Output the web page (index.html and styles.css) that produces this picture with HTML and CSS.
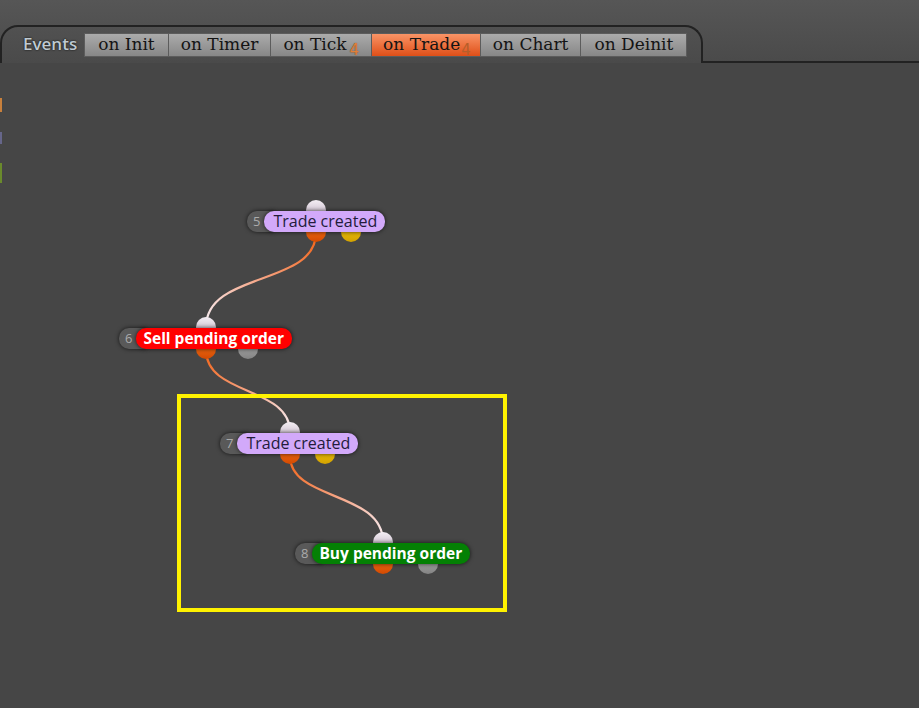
FILE: index.html
```html
<!DOCTYPE html>
<html lang="en">
<head>
    <meta charset="UTF-8">
    <meta name="viewport" content="width=device-width, initial-scale=1.0">
    <title>Events</title>
    <link rel="stylesheet" href="styles.css">
</head>
<body>

    <div class="header">
        <div class="tab-panel">
            <span class="events-label">Events</span>
            <div class="tabs">
                <div class="tab">on Init</div>
                <div class="tab">on Timer</div>
                <div class="tab">on Tick<span class="count">4</span></div>
                <div class="tab active">on Trade<span class="count">4</span></div>
                <div class="tab">on Chart</div>
                <div class="tab">on Deinit</div>
            </div>
        </div>
        <div class="header-rest"></div>
    </div>

    <div class="canvas">
        <!-- bouts de la palette coupée à gauche -->
        <div class="edge-mark mark-orange"></div>
        <div class="edge-mark mark-purple"></div>
        <div class="edge-mark mark-green"></div>

        <svg class="links" width="919" height="646" viewBox="0 62 919 646">
            <defs>
                <linearGradient id="link1" gradientUnits="userSpaceOnUse" x1="316" y1="232" x2="206" y2="326">
                    <stop offset="0" stop-color="#f26418"/>
                    <stop offset="0.5" stop-color="#f7a585"/>
                    <stop offset="1" stop-color="#f6eef4"/>
                </linearGradient>
                <linearGradient id="link2" gradientUnits="userSpaceOnUse" x1="206" y1="349" x2="290" y2="431">
                    <stop offset="0" stop-color="#f26418"/>
                    <stop offset="0.5" stop-color="#f7a585"/>
                    <stop offset="1" stop-color="#f6eef4"/>
                </linearGradient>
                <linearGradient id="link3" gradientUnits="userSpaceOnUse" x1="290" y1="455" x2="383" y2="541">
                    <stop offset="0" stop-color="#f26418"/>
                    <stop offset="0.5" stop-color="#f7a585"/>
                    <stop offset="1" stop-color="#f6eef4"/>
                </linearGradient>
            </defs>
            <path d="M316 232 C316 285 206 270 206 326" stroke="url(#link1)" stroke-width="2.2" fill="none"/>
            <path d="M206 349 C206 395 290 385 290 431" stroke="url(#link2)" stroke-width="2.2" fill="none"/>
            <path d="M290 455 C290 500 383 490 383 541" stroke="url(#link3)" stroke-width="2.2" fill="none"/>
        </svg>

        <div class="selection"></div>

        <div class="node n5">
            <span class="plug plug-in"></span>
            <span class="plug plug-out orange"></span>
            <span class="plug plug-out yellow"></span>
            <span class="node-num">5</span>
            <span class="node-label lavender">Trade created</span>
        </div>

        <div class="node n6">
            <span class="plug plug-in"></span>
            <span class="plug plug-out orange"></span>
            <span class="plug plug-out grey"></span>
            <span class="node-num">6</span>
            <span class="node-label red">Sell pending order</span>
        </div>

        <div class="node n7">
            <span class="plug plug-in"></span>
            <span class="plug plug-out orange"></span>
            <span class="plug plug-out yellow"></span>
            <span class="node-num">7</span>
            <span class="node-label lavender">Trade created</span>
        </div>

        <div class="node n8">
            <span class="plug plug-in"></span>
            <span class="plug plug-out orange"></span>
            <span class="plug plug-out grey"></span>
            <span class="node-num">8</span>
            <span class="node-label green">Buy pending order</span>
        </div>
    </div>

</body>
</html>
```

FILE: styles.css
```css
body {
    margin: 0;
    background-color: #464646;
    font-family: "Open Sans", "DejaVu Sans", sans-serif;
    overflow: hidden;
}
.header {
    display: flex;
    height: 63px;
    background: linear-gradient(#565656, #4a4a4a);
}
.tab-panel {
    box-sizing: border-box;
    width: 703px;
    height: 38px;
    margin-top: 25px;
    border: 2px solid #222;
    border-bottom: none;
    border-radius: 18px 18px 0 0;
    display: flex;
    align-items: flex-start;
    padding: 6px 0 0 21px;
}
.header-rest {
    flex: 1;
    border-bottom: 2px solid #222;
}
.events-label {
    color: #bfcad2;
    font-size: 17px;
    font-weight: 600;
    line-height: 22px;
    text-shadow: 0 0 2px #000;
    margin-right: 7px;
}
.tabs {
    display: flex;
}
.tab {
    box-sizing: border-box;
    height: 24px;
    padding: 0 12px;
    border: 1px solid #5c5c5c;
    border-left: none;
    background: linear-gradient(#ababab, #878787);
    color: #141414;
    font-family: "DejaVu Serif", serif;
    font-size: 17px;
    line-height: 21px;
    white-space: nowrap;
}
.tab:first-child {
    border-left: 1px solid #5c5c5c;
    padding: 0 13px;
}
.tab:last-child {
    padding: 0 13px;
}
.tab.active {
    background: linear-gradient(#f99466, #df4f18);
    padding: 0 9px 0 11px;
}
.count {
    display: inline-block;
    vertical-align: -5px;
    margin-left: 3px;
    font-family: "DejaVu Sans", sans-serif;
    font-size: 15px;
    line-height: 15px;
    color: #e0803a;
    text-shadow: 0 0 1px #6a3a1a;
}
.tab.active .count {
    margin-left: 1px;
    color: #b65e2a;
    text-shadow: none;
}

.canvas {
    position: relative;
    height: 645px;
}
.links {
    position: absolute;
    left: 0;
    top: 0;
}
.edge-mark {
    position: absolute;
    left: 0;
    width: 2px;
}
.mark-orange {
    top: 35px;
    height: 14px;
    background-color: #c8803c;
}
.mark-purple {
    top: 69px;
    height: 12px;
    background-color: #66668a;
}
.mark-green {
    top: 100px;
    height: 20px;
    background-color: #6a8a2c;
}
.selection {
    position: absolute;
    left: 177px;
    top: 331px;
    width: 322px;
    height: 210px;
    border: 4px solid #fff200;
}

.node {
    position: absolute;
    display: flex;
    height: 21px;
}
.n5 { left: 247px; top: 148px; }
.n6 { left: 119px; top: 265px; }
.n7 { left: 220px; top: 370px; }
.n8 { left: 295px; top: 480px; }

.node-num {
    position: relative;
    z-index: 1;
    padding: 0 14px 0 6px;
    background-color: #595959;
    border-radius: 10px 0 0 10px;
    color: #ababab;
    font-size: 13px;
    line-height: 21px;
    box-shadow: 0 0 4px rgba(0, 0, 0, 0.7);
}
.node-label {
    position: relative;
    z-index: 2;
    margin-left: -10px;
    padding: 0 8px 0 9px;
    border-radius: 10px;
    font-size: 16px;
    line-height: 21px;
    white-space: nowrap;
    box-shadow: 0 0 4px rgba(0, 0, 0, 0.7);
}
.lavender {
    background-color: #d2a9fa;
    color: #221c3a;
}
.red {
    background-color: #ff0000;
    color: #fff;
    font-weight: 700;
    font-size: 15.5px;
    padding-left: 7px;
}
.green {
    background-color: #048004;
    color: #fff;
    font-weight: 700;
    font-size: 15.5px;
    padding-left: 7px;
}

.plug {
    position: absolute;
    z-index: 0;
    width: 20px;
    height: 20px;
    border-radius: 50%;
}
.plug-in {
    top: -11px;
    background: linear-gradient(#f4eef4, #b9a9bb);
}
.plug-out {
    top: 11px;
}
.orange {
    background: linear-gradient(#ff7a1c, #d24a02);
}
.yellow {
    background: linear-gradient(#f6cc10, #d3a200);
}
.grey {
    background: linear-gradient(#b4b4b4, #838383);
}
.n5 .plug-in, .n5 .orange { left: 59px; }
.n5 .yellow { left: 94px; }
.n6 .plug-in, .n6 .orange { left: 77px; }
.n6 .grey { left: 119px; }
.n7 .plug-in, .n7 .orange { left: 60px; }
.n7 .yellow { left: 95px; }
.n8 .plug-in, .n8 .orange { left: 78px; }
.n8 .grey { left: 123px; }
```
